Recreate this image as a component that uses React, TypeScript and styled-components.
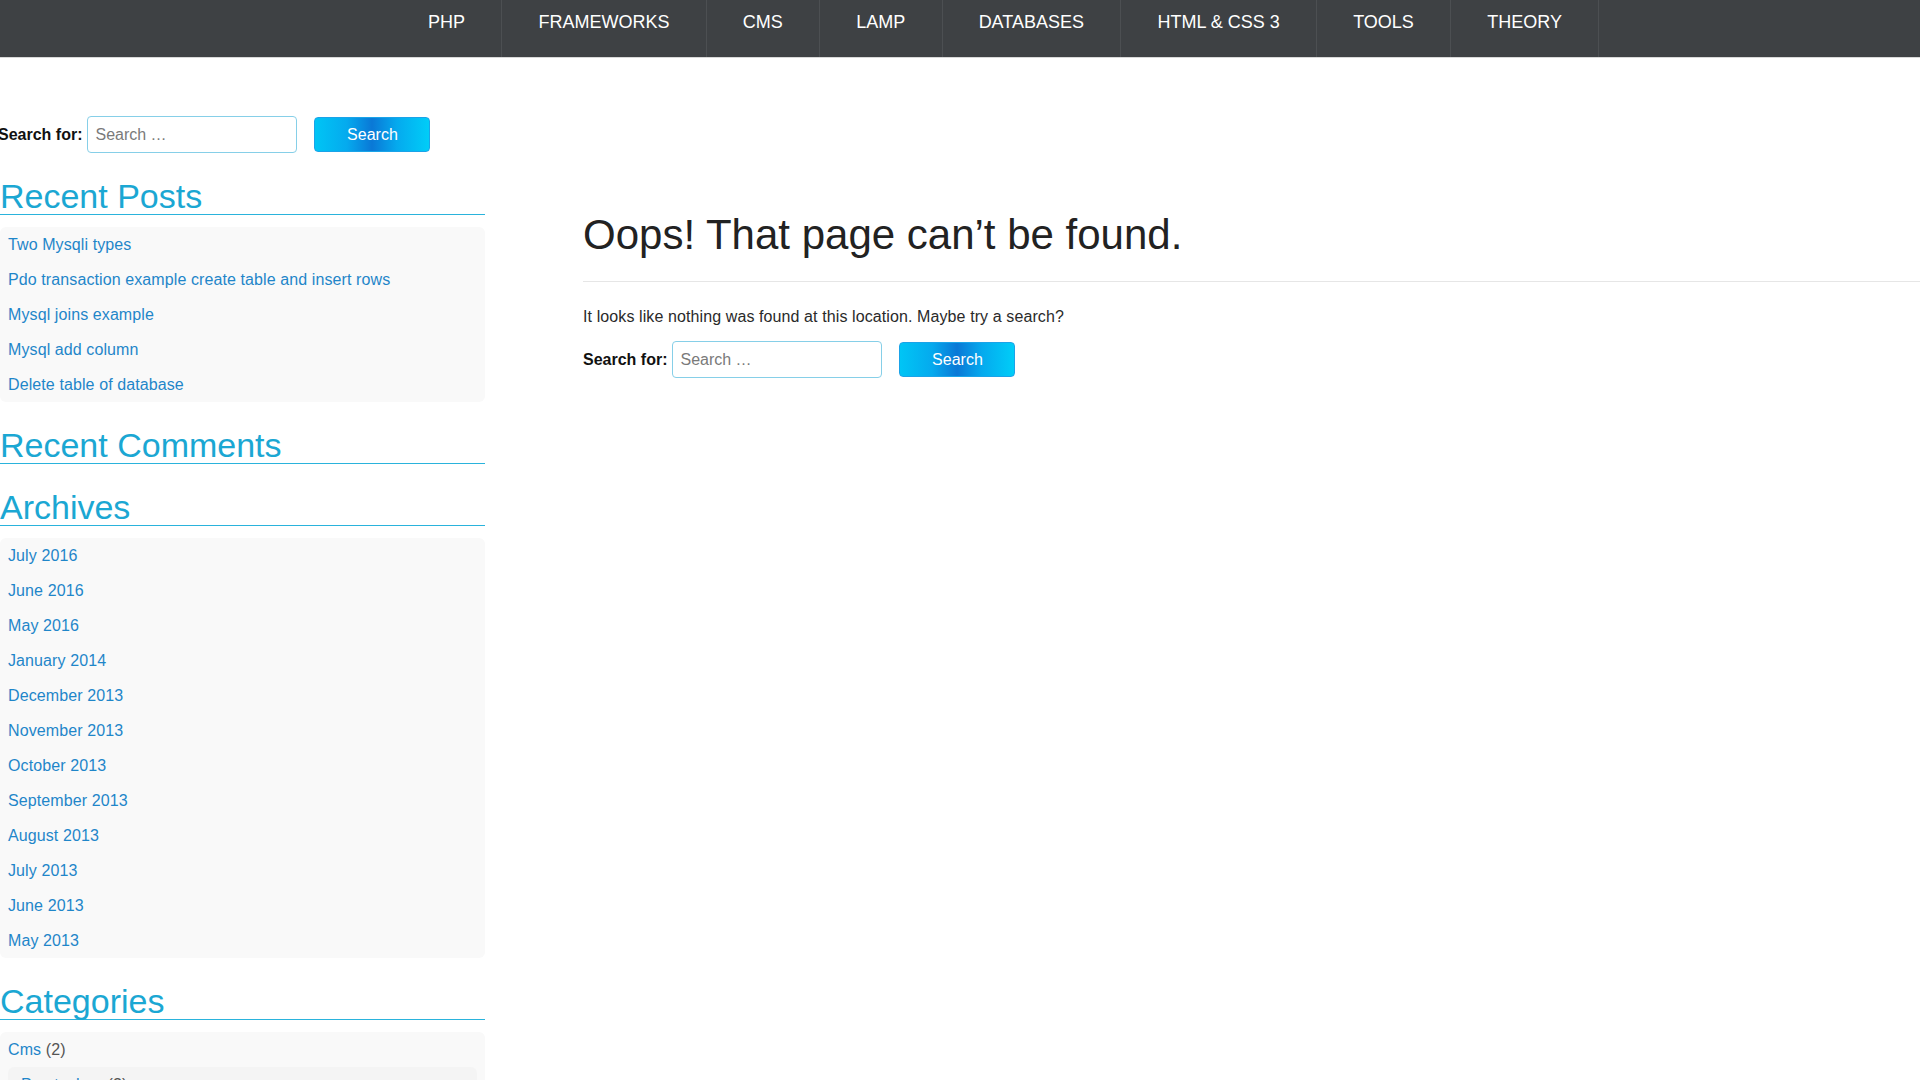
import React from "react";
import styled, { createGlobalStyle } from "styled-components";

const GlobalStyle = createGlobalStyle`
  html, body {
    margin: 0;
    padding: 0;
    background: #ffffff;
    font-family: "Liberation Sans", Arial, sans-serif;
    overflow: hidden;
  }
  * { box-sizing: border-box; }
`;

const NavBar = styled.header`
  height: 58px;
  background: #3e4144;
  border-bottom: 1px solid #d8d8d8;
`;

const NavList = styled.ul`
  display: flex;
  list-style: none;
  margin: 0 0 0 392px;
  padding: 0;
  height: 57px;
`;

const NavItem = styled.li`
  height: 57px;
  padding: 12px 36.4px 0 36px;
  border-right: 1px solid #4c4f52;
  color: #ffffff;
  font-size: 18px;
  line-height: 21px;
  white-space: nowrap;
  text-transform: uppercase;
`;

const Page = styled.div`
  display: flex;
  align-items: flex-start;
  padding-top: 58px;
`;

const Sidebar = styled.aside`
  width: 485px;
  flex: none;
`;

const Main = styled.main`
  flex: 1;
  margin-left: 98px;
  padding-top: 95px;
`;

const SearchForm = styled.form`
  display: flex;
  align-items: center;
  height: 37px;
`;

const SearchLabel = styled.label<{ $offset?: number }>`
  font-weight: bold;
  font-size: 16px;
  color: #111;
  margin-left: ${(p) => p.$offset ?? 0}px;
  margin-right: 5px;
  white-space: nowrap;
`;

const SearchInput = styled.input`
  width: 210px;
  height: 37px;
  border: 1px solid #86cfe8;
  border-radius: 4px;
  padding: 0 7px;
  font-family: "Liberation Sans", Arial, sans-serif;
  font-size: 16px;
  color: #333;
  background: #fff;
  outline: none;
  &::placeholder {
    color: #7a7a7a;
  }
`;

const SearchButton = styled.button`
  width: 116px;
  height: 35px;
  margin-left: 17px;
  border: 1px solid #1ba3e8;
  border-radius: 4px;
  background: linear-gradient(
    to right,
    #00c5f5 0%,
    #05aaee 28%,
    #0a78d6 50%,
    #05aaee 72%,
    #00cdf8 100%
  );
  color: #ffffff;
  font-family: "Liberation Sans", Arial, sans-serif;
  font-size: 16px;
  cursor: pointer;
`;

const Widget = styled.section`
  margin-top: 25px;
`;

const WidgetTitle = styled.h2`
  margin: 0;
  font-size: 34px;
  font-weight: normal;
  line-height: 36px;
  color: #1ba7d3;
  border-bottom: 1px solid #2ab3dc;
`;

const Panel = styled.ul<{ $nested?: boolean }>`
  list-style: none;
  margin: ${(p) => (p.$nested ? "0" : "12px 0 0")};
  padding: ${(p) => (p.$nested ? "0 13px" : "0 8px")};
  background: ${(p) => (p.$nested ? "#f4f4f4" : "#f9f9f9")};
  border-radius: 6px;
`;

const PanelItem = styled.li`
  font-size: 16px;
  line-height: 35px;
  letter-spacing: 0.1px;
  color: #555;
`;

const ItemLink = styled.a`
  color: #1f86c9;
  text-decoration: none;
`;

const PageTitle = styled.h1`
  margin: 0;
  font-size: 42px;
  font-weight: normal;
  line-height: 48px;
  color: #222;
  padding-bottom: 22px;
  border-bottom: 1px solid #e6e6e6;
`;

const Notice = styled.p`
  margin: 26px 0 15px;
  font-size: 16px;
  line-height: 18px;
  letter-spacing: 0.1px;
  color: #2a2a2a;
`;

const navItems = ["PHP", "Frameworks", "CMS", "LAMP", "Databases", "HTML & CSS 3", "Tools", "Theory"];

const recentPosts = [
  "Two Mysqli types",
  "Pdo transaction example create table and insert rows",
  "Mysql joins example",
  "Mysql add column",
  "Delete table of database",
];

const archives = [
  "July 2016",
  "June 2016",
  "May 2016",
  "January 2014",
  "December 2013",
  "November 2013",
  "October 2013",
  "September 2013",
  "August 2013",
  "July 2013",
  "June 2013",
  "May 2013",
];

const Search: React.FC<{ offset?: number }> = ({ offset }) => (
  <SearchForm onSubmit={(e) => e.preventDefault()}>
    <SearchLabel $offset={offset}>Search for:</SearchLabel>
    <SearchInput type="search" placeholder="Search …" />
    <SearchButton type="submit">Search</SearchButton>
  </SearchForm>
);

export default function App() {
  return (
    <>
      <GlobalStyle />
      <NavBar>
        <NavList>
          {navItems.map((n) => (
            <NavItem key={n}>{n}</NavItem>
          ))}
        </NavList>
      </NavBar>
      <Page>
        <Sidebar>
          <Search offset={-2} />
          <Widget>
            <WidgetTitle>Recent Posts</WidgetTitle>
            <Panel>
              {recentPosts.map((p) => (
                <PanelItem key={p}>
                  <ItemLink href="#">{p}</ItemLink>
                </PanelItem>
              ))}
            </Panel>
          </Widget>
          <Widget>
            <WidgetTitle>Recent Comments</WidgetTitle>
          </Widget>
          <Widget>
            <WidgetTitle>Archives</WidgetTitle>
            <Panel>
              {archives.map((a) => (
                <PanelItem key={a}>
                  <ItemLink href="#">{a}</ItemLink>
                </PanelItem>
              ))}
            </Panel>
          </Widget>
          <Widget>
            <WidgetTitle>Categories</WidgetTitle>
            <Panel>
              <PanelItem>
                <ItemLink href="#">Cms</ItemLink> (2)
                <Panel $nested>
                  <PanelItem>
                    <ItemLink href="#">Prestashop</ItemLink> (2)
                  </PanelItem>
                </Panel>
              </PanelItem>
            </Panel>
          </Widget>
        </Sidebar>
        <Main>
          <PageTitle>Oops! That page can’t be found.</PageTitle>
          <Notice>It looks like nothing was found at this location. Maybe try a search?</Notice>
          <Search />
        </Main>
      </Page>
    </>
  );
}
